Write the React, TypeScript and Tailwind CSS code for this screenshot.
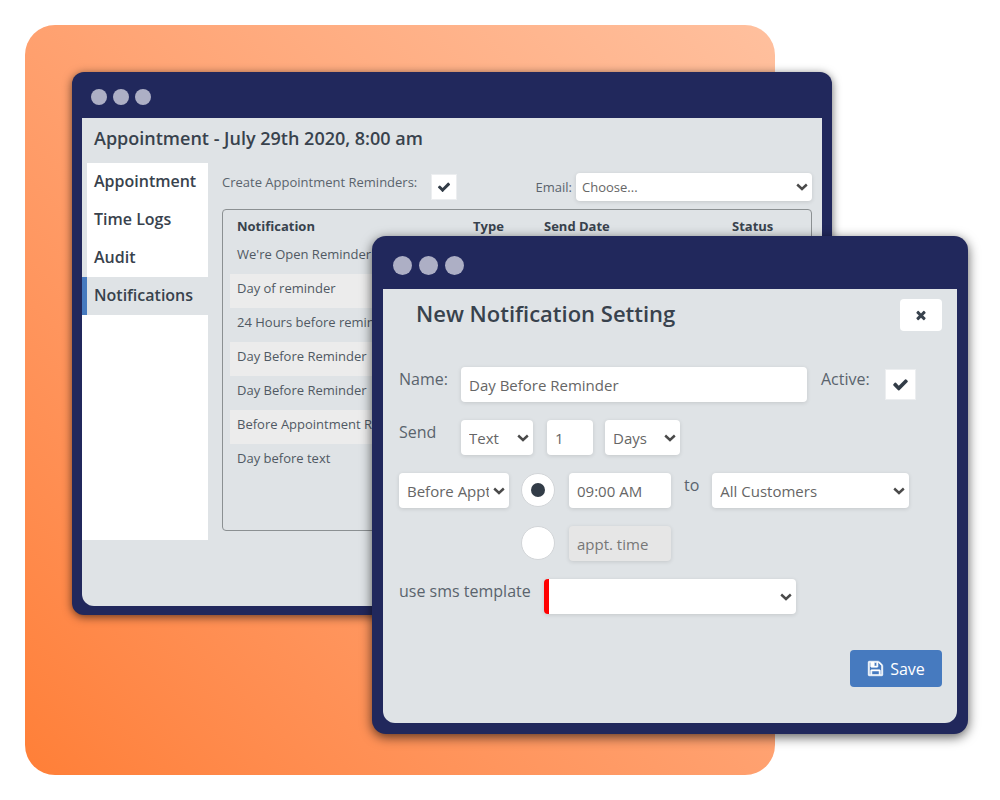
import React, { useState } from 'react';

const reminders = [
  "We're Open Reminder",
  'Day of reminder',
  '24 Hours before reminder',
  'Day Before Reminder',
  'Day Before Reminder',
  'Before Appointment Rule',
  'Day before text',
];

const tabs = ['Appointment', 'Time Logs', 'Audit', 'Notifications'];

const CHECK =
  'M1671 566q0 40-28 68l-724 724-136 136q-28 28-68 28t-68-28l-136-136-362-362q-28-28-28-68t28-68l136-136q28-28 68-28t68 28l294 295 656-657q28-28 68-28t68 28l136 136q28 28 28 68z';
const TIMES =
  'M1490 1322q0 40-28 68l-136 136q-28 28-68 28t-68-28l-294-294-294 294q-28 28-68 28t-68-28l-136-136q-28-28-28-68t28-68l294-294-294-294q-28-28-28-68t28-68l136-136q28-28 68-28t68 28l294 294 294-294q28-28 68-28t68 28l136 136q28 28 28 68t-28 68l-294 294 294 294q28 28 28 68z';
const FLOPPY =
  'M512 1536h768v-384h-768v384zm896 0h128v-896q0-14-10-38.5t-20-34.5l-281-281q-10-10-34-20t-39-10v416q0 40-28 68t-68 28h-576q-40 0-68-28t-28-68v-416h-128v1280h128v-416q0-40 28-68t68-28h832q40 0 68 28t28 68v416zm-384-928v-320q0-13-9.5-22.5t-22.5-9.5h-192q-13 0-22.5 9.5t-9.5 22.5v320q0 13 9.5 22.5t22.5 9.5h192q13 0 22.5-9.5t9.5-22.5zm640 32v928q0 40-28 68t-68 28h-1344q-40 0-68-28t-28-68v-1344q0-40 28-68t68-28h928q40 0 88 20t76 48l280 280q28 28 48 76t20 88z';

const Icon: React.FC<{ path: string; className: string }> = ({ path, className }) => (
  <svg viewBox="0 0 1792 1792" fill="currentColor" aria-hidden="true" className={className}>
    <path d={path} />
  </svg>
);

type SelectProps = {
  id?: string;
  label?: string;
  options: string[];
  className: string;
  selectClass?: string;
};

const Select: React.FC<SelectProps> = ({ id, label, options, className, selectClass = 'h-[35px] pl-2 pr-5 text-[15px]' }) => (
  <span className={`grid items-center ${className}`}>
    <select
      id={id}
      aria-label={label}
      className={`col-start-1 row-start-1 w-full appearance-none rounded bg-white text-[#666] shadow-[0_1px_4px_rgba(0,0,0,0.12)] ${selectClass}`}
    >
      {options.map((option) => (
        <option key={option}>{option}</option>
      ))}
    </select>
    <svg
      viewBox="0 0 12 8"
      aria-hidden="true"
      className="pointer-events-none col-start-1 row-start-1 mr-1 h-2 w-3 justify-self-end text-[#4a4a4a]"
    >
      <path d="M1.2 1.500 6 6l4.800-4.500" fill="none" stroke="currentColor" strokeWidth="2.4" />
    </svg>
  </span>
);

const Checkbox: React.FC<{ id: string; boxClass: string; iconClass: string }> = ({ id, boxClass, iconClass }) => {
  const [checked, setChecked] = useState(true);

  return (
    <span className="grid place-items-center">
      <input
        id={id}
        type="checkbox"
        checked={checked}
        onChange={() => setChecked(!checked)}
        className={`col-start-1 row-start-1 appearance-none border border-[#eceef0] bg-white ${boxClass}`}
      />
      {checked && <Icon path={CHECK} className={`pointer-events-none col-start-1 row-start-1 text-[#323c47] ${iconClass}`} />}
    </span>
  );
};

const Dots: React.FC<{ className: string; dotClass: string }> = ({ className, dotClass }) => (
  <div className={`flex items-center ${className}`}>
    {[0, 1, 2].map((dot) => (
      <span key={dot} className={`rounded-full bg-[#adafc5] ${dotClass}`} />
    ))}
  </div>
);

const AppointmentWindow: React.FC = () => {
  const [activeTab, setActiveTab] = useState('Notifications');

  return (
    <section className="absolute top-[72px] left-[7.2%] w-[76%] rounded-xl bg-[#21285c] px-[10px] pb-[9px] shadow-[0_2px_10px_rgba(0,0,0,0.6)]">
      <Dots className="h-[46px] gap-[6px] px-[9px] pt-1" dotClass="size-4" />
      <div className="h-[488px] rounded-b-xl bg-[#dfe3e6]">
        <h1 className="px-3 pt-2 text-lg leading-6 font-semibold">Appointment - July 29th 2020, 8:00 am</h1>
        <div className="flex gap-[14px] pt-[13px] pr-[10px]">
          <nav className="flex h-[377px] w-[126px] shrink-0 flex-col">
            {tabs.map((tab) => (
              <button
                key={tab}
                type="button"
                onClick={() => setActiveTab(tab)}
                className={`h-[38px] border-l-[5px] pb-[2px] pl-[7px] text-left text-base font-semibold ${
                  tab === activeTab ? 'border-[#467abf]' : 'border-[#dfe3e6] bg-white'
                }`}
              >
                {tab}
              </button>
            ))}
            <div className="flex-1 bg-white" />
          </nav>

          <div className="min-w-0 flex-1 pt-[10px]">
            <div className="flex items-start text-[13px] text-[#5a636d]">
              <label htmlFor="create-reminders" className="mr-[14px] leading-[18px]">
                Create Appointment Reminders:
              </label>
              <span className="pt-px">
                <Checkbox id="create-reminders" boxClass="size-[26px]" iconClass="size-[14px]" />
              </span>
              <label htmlFor="email" className="mr-1 ml-auto leading-7">
                Email:
              </label>
              <Select
                id="email"
                options={['Choose...']}
                className="w-[236px]"
                selectClass="h-7 pl-[6px] pr-5 pt-[2px] text-[13px]"
              />
            </div>

            <div className="mt-2 h-[322px] rounded border border-[#8b9092] px-[7px]">
              <table className="w-full table-fixed text-left text-[13px]">
                <thead>
                  <tr className="h-[30px] align-middle">
                    <th className="w-[243px] pt-[3px] pl-[7px] font-bold">Notification</th>
                    <th className="w-[71px] pt-[3px] font-bold">Type</th>
                    <th className="w-[188px] pt-[3px] font-bold">Send Date</th>
                    <th className="pt-[3px] font-bold">Status</th>
                  </tr>
                </thead>
                <tbody>
                  {reminders.map((name, index) => (
                    <tr key={index} className="h-[34px] align-top text-[#505963] even:bg-[#ececec]">
                      <td className="truncate pt-1 pl-[7px] leading-5">{name}</td>
                      <td />
                      <td />
                      <td />
                    </tr>
                  ))}
                </tbody>
              </table>
            </div>
          </div>
        </div>
      </div>
    </section>
  );
};

const fieldClass = 'h-[35px] rounded px-2 text-[15px] text-[#666] shadow-[0_1px_4px_rgba(0,0,0,0.12)]';
const radioClass =
  "grid size-[34px] shrink-0 appearance-none place-items-center rounded-full border border-[#d2d5d8] bg-white checked:before:size-[14px] checked:before:rounded-full checked:before:bg-[#323c47] checked:before:content-['']";

const NotificationWindow: React.FC = () => {
  const [sendAt, setSendAt] = useState<'fixed' | 'appt'>('fixed');

  return (
    <section className="absolute top-[236px] left-[37.2%] w-[59.6%] rounded-[14px] bg-[#21285c] px-[11px] pb-[11px] shadow-[0_3px_12px_rgba(0,0,0,0.65)]">
      <Dots className="h-[53px] gap-[7px] px-[10px] pt-[5px]" dotClass="size-[19px]" />
      <form onSubmit={(e) => e.preventDefault()} className="rounded-b-xl bg-[#dfe3e6] px-[15px] pt-[10px] pb-9">
        <div className="flex items-start justify-between pl-[18px]">
          <h2 className="text-[22px] leading-7 font-semibold">New Notification Setting</h2>
          <button type="button" aria-label="Close" className="grid h-8 w-[42px] place-items-center rounded bg-white">
            <Icon path={TIMES} className="size-[14px]" />
          </button>
        </div>

        <div className="flex flex-col gap-[18px] pt-9 pl-px text-base leading-6 text-[#5a636d]">
          <div className="flex items-start pr-[26px]">
            <label htmlFor="name" className="w-[62px]">
              Name:
            </label>
            <input id="name" defaultValue="Day Before Reminder" className={`min-w-0 flex-1 bg-white ${fieldClass}`} />
            <label htmlFor="active" className="ml-[14px] w-[64px]">
              Active:
            </label>
            <span className="pt-[2px]">
              <Checkbox id="active" boxClass="size-[31px]" iconClass="size-[17px]" />
            </span>
          </div>

          <div className="flex items-start">
            <label htmlFor="send-type" className="w-[62px]">
              Send
            </label>
            <Select id="send-type" options={['Text', 'Email']} className="mr-[14px] w-[72px]" />
            <input aria-label="Amount" defaultValue="1" className={`mr-3 w-[46px] bg-white ${fieldClass}`} />
            <Select label="Unit" options={['Days', 'Hours']} className="w-[75px]" />
          </div>

          <div className="flex items-start">
            <Select label="When" options={['Before Appt.', 'After Appt.']} className="mr-3 w-[110px]" />
            <input
              type="radio"
              name="send-at"
              aria-label="At a set time"
              checked={sendAt === 'fixed'}
              onChange={() => setSendAt('fixed')}
              className={radioClass}
            />
            <input aria-label="Send time" defaultValue="09:00 AM" className={`ml-[14px] w-[102px] bg-white ${fieldClass}`} />
            <label htmlFor="customers" className="mx-[13px]">
              to
            </label>
            <Select id="customers" options={['All Customers']} className="w-[197px]" />
          </div>

          <div className="flex items-start pl-[122px]">
            <input
              type="radio"
              name="send-at"
              aria-label="At appointment time"
              checked={sendAt === 'appt'}
              onChange={() => setSendAt('appt')}
              className={radioClass}
            />
            <input
              aria-label="Appointment time"
              placeholder="appt. time"
              disabled
              className={`ml-[14px] w-[102px] bg-[#e6e6e6] placeholder:text-[#777] ${fieldClass}`}
            />
          </div>

          <div className="flex items-start">
            <label htmlFor="template" className="w-[145px]">
              use sms template
            </label>
            <Select
              id="template"
              options={['']}
              className="w-[252px]"
              selectClass="h-[35px] border-l-[5px] border-[#f00] pl-2 pr-5 text-[15px]"
            />
          </div>
        </div>

        <div className="flex justify-end pt-9">
          <button
            type="submit"
            className="flex h-[37px] w-[92px] items-center justify-center gap-[6px] rounded bg-[#467abf] text-base font-medium text-white"
          >
            <Icon path={FLOPPY} className="size-[17px] stroke-current stroke-[60]" />
            Save
          </button>
        </div>
      </form>
    </section>
  );
};

const App: React.FC = () => (
  <main className="relative min-h-screen bg-white py-[25px] font-['Open_Sans',sans-serif] text-[#38424d]">
    <div className="ml-[2.5%] h-[750px] w-3/4 rounded-[30px] bg-linear-to-tr from-[#ff7f37] to-[#ffc09e]" />
    <AppointmentWindow />
    <NotificationWindow />
  </main>
);

export default App;
